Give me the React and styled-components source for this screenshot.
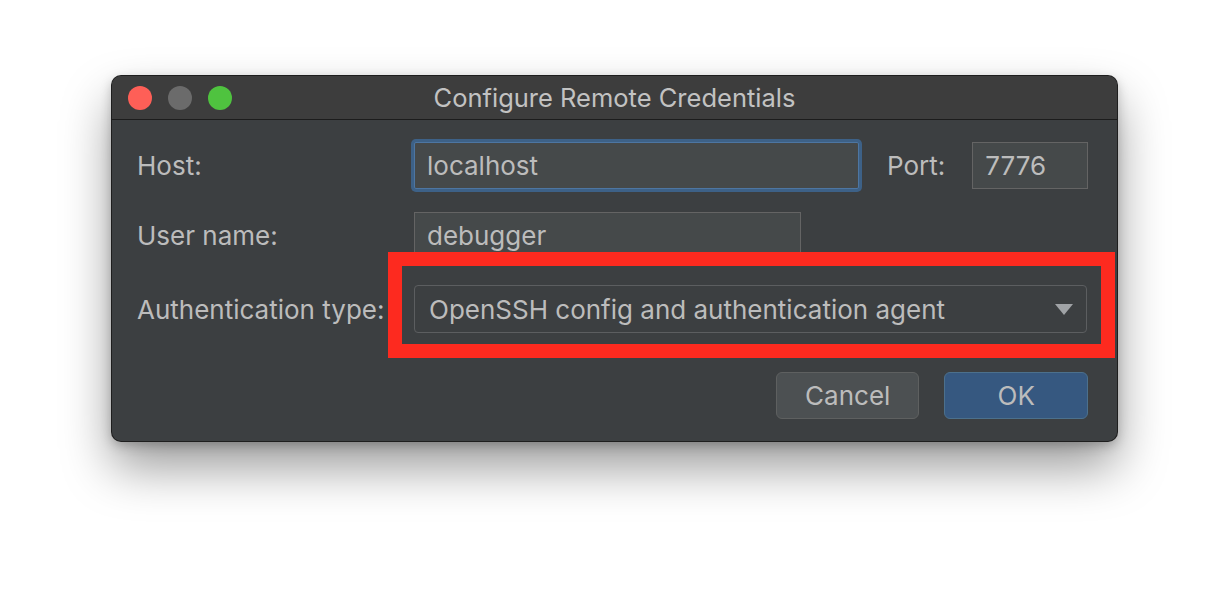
import styled, { createGlobalStyle } from 'styled-components';

const Global = createGlobalStyle`
  html, body {
    margin: 0;
    background: #ffffff;
  }
  body {
    font-family: Inter, "Noto Sans", "Liberation Sans", sans-serif;
  }
`;

const Page = styled.div`
  width: 1230px;
  height: 590px;
  padding: 76px 0 0 112px;
  box-sizing: border-box;
`;

const Window = styled.div`
  position: relative;
  width: 1005px;
  height: 365px;
  border-radius: 9px;
  overflow: hidden;
  background: #3c3f41;
  box-shadow: 0 0 0 1px #1e1e1e, 0 26px 50px rgba(0, 0, 0, 0.4), 0 4px 12px rgba(0, 0, 0, 0.25);
  display: flex;
  flex-direction: column;
`;

const TitleBar = styled.div`
  position: relative;
  height: 43px;
  flex-shrink: 0;
  background: #3d3d3d;
  border-bottom: 1px solid #1c1c1c;
  display: flex;
  align-items: center;
  justify-content: center;
`;

const Lights = styled.div`
  position: absolute;
  left: 16px;
  top: 10px;
  display: flex;
  gap: 16px;
`;

const Light = styled.span`
  width: 24px;
  height: 24px;
  border-radius: 50%;
  background: ${(p) => p.color};
`;

const Title = styled.div`
  color: #c2c2c2;
  font-size: 25.5px;
`;

const Body = styled.div`
  flex: 1;
  padding: 22px 29px 22px 25px;
  display: grid;
  grid-template-columns: 277px 1fr;
  grid-template-rows: 47px 47px 51px;
  row-gap: 23px;
  align-items: center;
`;

const Label = styled.div`
  color: #bcbcbc;
  font-size: 26px;
  white-space: nowrap;
  padding-top: ${(p) => p.offset || 0}px;
`;

const Cell = styled.div`
  display: flex;
  align-items: center;
  align-self: ${(p) => (p.bottom ? 'end' : 'center')};
`;

const Field = styled.div`
  box-sizing: border-box;
  width: ${(p) => p.w}px;
  height: 47px;
  padding-left: 12px;
  display: flex;
  align-items: center;
  background: #45494a;
  border: 1px solid ${(p) => (p.focused ? '#4d76a2' : '#646464')};
  box-shadow: ${(p) => (p.focused ? '0 0 0 3px #3d6187' : 'none')};
  border-radius: ${(p) => (p.focused ? '2px' : '0')};
  color: #bcbcbc;
  font-size: 26px;
`;

const PortLabel = styled(Label)`
  margin: 0 27px 0 28px;
`;

const Combo = styled.div`
  box-sizing: border-box;
  width: 673px;
  height: 48px;
  padding: 0 13px 0 14px;
  display: flex;
  align-items: center;
  justify-content: space-between;
  background: #3c3f41;
  border: 1px solid #5c5e60;
  border-radius: 4px;
  color: #bcbcbc;
  font-size: 26px;
`;

const Footer = styled.div`
  grid-column: 1 / 3;
  display: flex;
  justify-content: flex-end;
  gap: 25px;
  margin-top: 16px;
`;

const Button = styled.div`
  box-sizing: border-box;
  width: ${(p) => p.w}px;
  height: 47px;
  display: flex;
  align-items: center;
  justify-content: center;
  border-radius: 6px;
  background: ${(p) => (p.primary ? '#365880' : '#4c5052')};
  border: 1px solid ${(p) => (p.primary ? '#4c708c' : '#5e6060')};
  color: #bcbcbc;
  font-size: 26px;
`;

const Highlight = styled.div`
  position: absolute;
  left: 276px;
  top: 176px;
  width: 727px;
  height: 106px;
  box-sizing: border-box;
  border: 14px solid #fd2a1f;
  pointer-events: none;
`;

export default function App() {
  return (
    <Page>
      <Global />
      <Window>
        <TitleBar>
          <Lights>
            <Light color="#fe5f57" />
            <Light color="#6b6b6b" />
            <Light color="#4fc33f" />
          </Lights>
          <Title>Configure Remote Credentials</Title>
        </TitleBar>
        <Body>
          <Label>Host:</Label>
          <Cell>
            <Field w={445} focused>localhost</Field>
            <PortLabel>Port:</PortLabel>
            <Field w={116}>7776</Field>
          </Cell>
          <Label>User name:</Label>
          <Cell>
            <Field w={387}>debugger</Field>
          </Cell>
          <Label offset={3}>Authentication type:</Label>
          <Cell bottom>
            <Combo>
              <span>OpenSSH config and authentication agent</span>
              <svg width="18" height="11" viewBox="0 0 18 11">
                <path d="M0 0 L18 0 L9 11 Z" fill="#a0a3a6" />
              </svg>
            </Combo>
          </Cell>
          <Footer>
            <Button w={143}>Cancel</Button>
            <Button w={144} primary>OK</Button>
          </Footer>
        </Body>
        <Highlight />
      </Window>
    </Page>
  );
}
